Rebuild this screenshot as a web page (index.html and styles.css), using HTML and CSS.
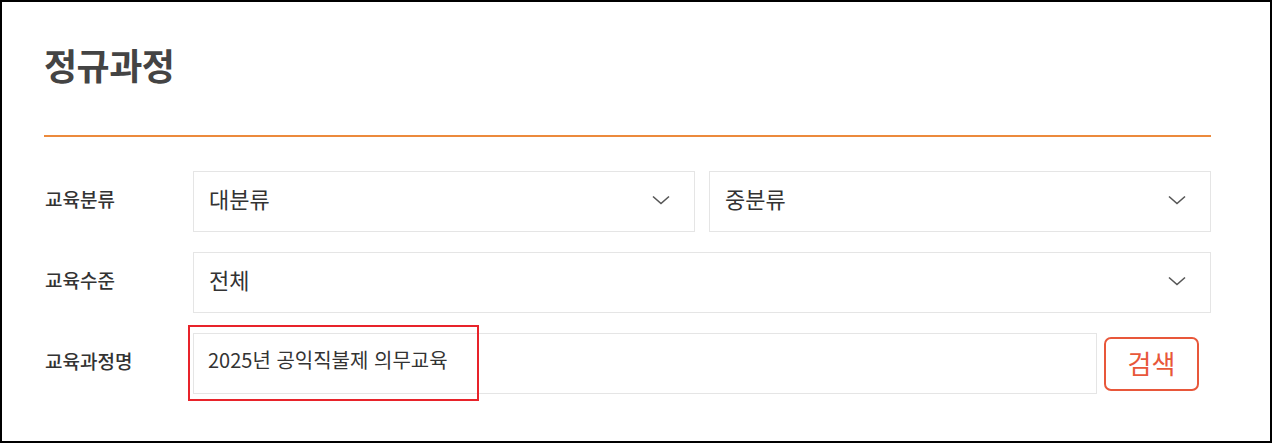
FILE: index.html
```html
<!DOCTYPE html>
<html lang="ko">
<head>
<meta charset="utf-8">
<link rel="stylesheet" href="styles.css">
</head>
<body>
<div class="panel">
  <div class="header">
    <h1 class="title">정규과정</h1>
  </div>
  <div class="form">
    <div class="row">
      <div class="label">교육분류</div>
      <div class="fields two">
        <div class="select"><span class="val">대분류</span>
          <svg class="chev" width="18" height="10" viewBox="0 0 18 10"><path d="M1 1.5 L9 8.5 L17 1.5" fill="none" stroke="#555" stroke-width="1.6"/></svg>
        </div>
        <div class="select"><span class="val">중분류</span>
          <svg class="chev" width="18" height="10" viewBox="0 0 18 10"><path d="M1 1.5 L9 8.5 L17 1.5" fill="none" stroke="#555" stroke-width="1.6"/></svg>
        </div>
      </div>
    </div>
    <div class="row">
      <div class="label">교육수준</div>
      <div class="fields">
        <div class="select"><span class="val">전체</span>
          <svg class="chev" width="18" height="10" viewBox="0 0 18 10"><path d="M1 1.5 L9 8.5 L17 1.5" fill="none" stroke="#555" stroke-width="1.6"/></svg>
        </div>
      </div>
    </div>
    <div class="row">
      <div class="label">교육과정명</div>
      <div class="fields search">
        <div class="input"><span class="val">2025년 공익직불제 의무교육</span>
          <div class="highlight"></div>
        </div>
        <button class="btn"><span class="btn-text">검색</span></button>
      </div>
    </div>
  </div>
</div>
</body>
</html>
```

FILE: styles.css
```css
* { box-sizing: border-box; }
html, body { margin: 0; padding: 0; background: #fff; }
body {
  font-family: "Noto Sans CJK KR", "Noto Sans", sans-serif;
  color: #333;
}
.panel {
  width: 1272px;
  height: 443px;
  border: 2px solid #000;
  padding: 0 59px 0 42px;
}
.header {
  border-bottom: 2px solid #ec8a3c;
  height: 135px;
  padding-top: 37px;
}
.title {
  margin: 0;
  font-size: 36px;
  line-height: 50px;
  font-weight: 700;
  color: #444;
  letter-spacing: -0.5px;
}
.form {
  padding-top: 34px;
  display: flex;
  flex-direction: column;
  gap: 20px;
}
.row {
  display: flex;
  align-items: center;
  height: 61px;
}
.label {
  width: 149px;
  flex: none;
  padding-left: 1px;
  font-size: 19px;
  font-weight: 500;
  color: #333;
  position: relative;
  top: -3px;
}
.fields {
  flex: 1;
  display: flex;
  gap: 14px;
  height: 100%;
}
.select, .input {
  flex: 1;
  position: relative;
  border: 1px solid #e5e5e5;
  display: flex;
  align-items: center;
  justify-content: space-between;
  padding: 0 24px 0 15px;
  font-size: 22px;
  color: #333;
}
.val {
  position: relative;
  top: -4px;
}
.chev { display: block; margin-top: -3px; }
.search { gap: 7px; padding-right: 12px; }
.input {
  font-size: 20px;
  padding-left: 14px;
}
.highlight {
  position: absolute;
  left: -6px;
  top: -9px;
  width: 291px;
  height: 76px;
  border: 2px solid #e8232a;
}
.btn {
  flex: none;
  align-self: center;
  width: 95px;
  height: 54px;
  border: 2px solid #e8573a;
  border-radius: 7px;
  background: #fff;
  color: #e8573a;
  font-family: inherit;
  font-size: 26px;
  padding: 0;
}
.btn-text {
  position: relative;
  top: -1px;
}
```
